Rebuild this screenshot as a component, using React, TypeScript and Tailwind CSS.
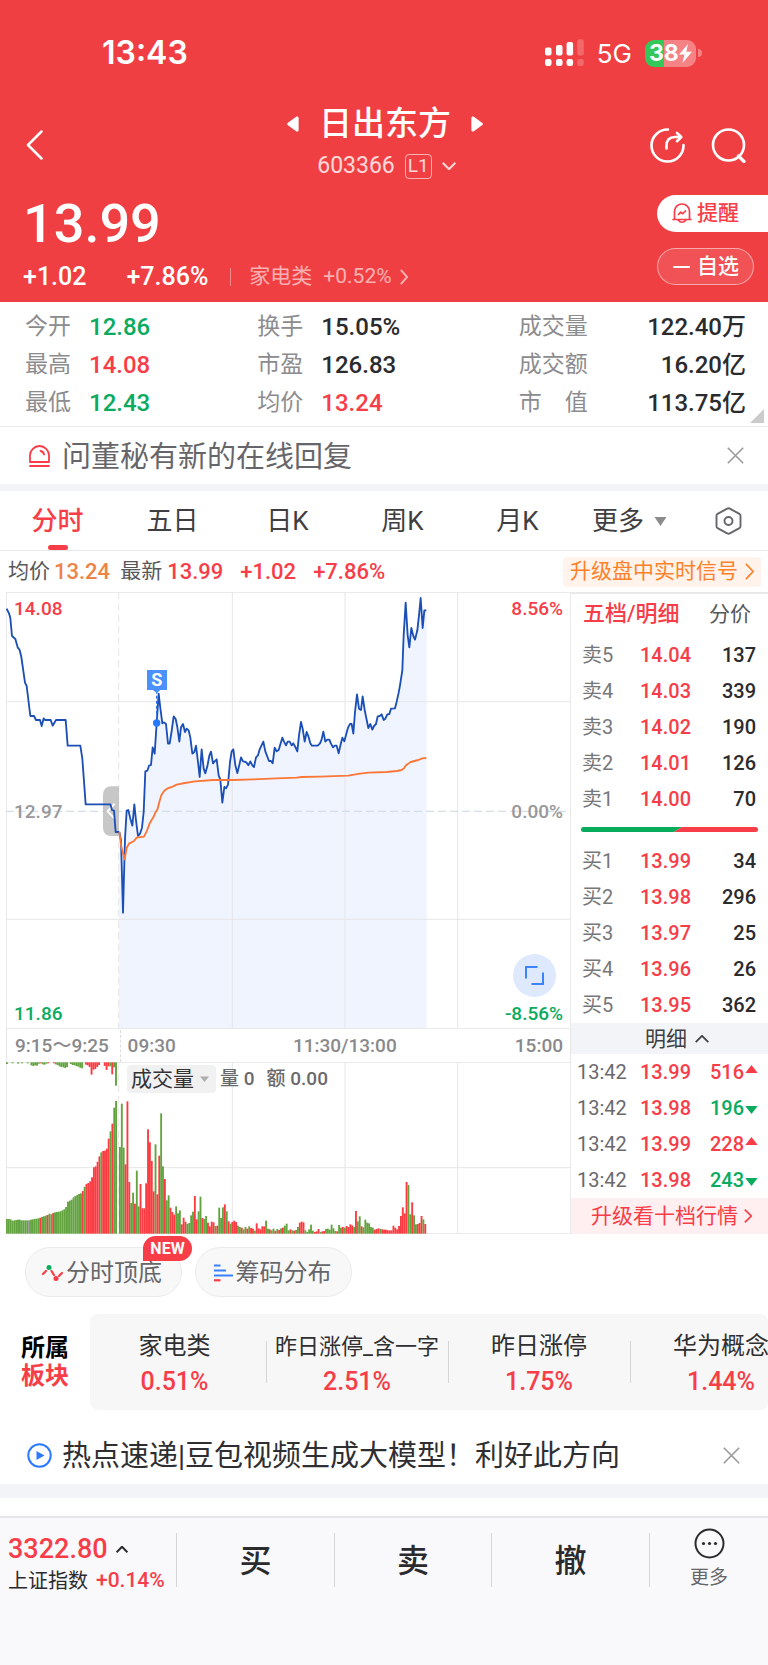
import React from 'react';

const RED = 'text-[#f73d48]';
const GREEN = 'text-[#0aab5f]';

const PRICE_LINE =
  '20,70 27,84 31,98 36,152 46,161 53,186 59,194 64,215 75,292 80,302 91,392 102,392 108,404 120,404 125,422 131,399 135,404 152,404 158,421 168,404 197,404 203,481 241,481 247,520 257,657 331,657 336,674 342,676 347,740 358,740';
const SESSION_LINE =
  '358,740 363,765 369,982 375,760 380,676 385,674 391,700 397,721 403,657 408,705 414,752 420,745 426,727 431,680 436,558 442,556 447,541 453,539 458,486 464,505 470,413 476,325 481,368 487,414 492,411 498,416 504,475 509,475 515,437 521,393 527,401 532,425 538,469 543,426 549,416 555,440 560,430 566,435 571,457 577,505 583,500 588,481 594,530 599,575 605,492 611,550 616,564 622,543 628,511 633,499 639,534 644,528 650,522 656,570 661,583 667,652 673,605 678,609 684,598 690,530 695,498 700,492 706,540 712,563 718,538 723,516 729,528 734,529 740,532 745,540 751,528 757,540 762,545 768,516 774,510 779,492 790,469 796,498 807,527 813,527 818,534 824,487 830,498 836,494 847,457 852,469 858,480 863,469 869,469 875,480 880,474 886,485 892,498 897,450 903,410 908,430 914,469 920,440 925,452 931,474 936,481 953,481 960,474 965,462 970,439 976,469 982,463 988,463 993,475 999,486 1004,481 1010,481 1016,504 1021,481 1027,457 1033,468 1039,445 1044,427 1050,416 1055,416 1060,445 1065,380 1071,327 1077,370 1083,374 1088,333 1094,374 1105,428 1111,416 1117,433 1122,422 1128,416 1133,393 1139,392 1145,387 1151,404 1156,400 1162,387 1168,386 1173,370 1185,369 1190,349 1196,322 1200,300 1207,255 1211,150 1217,52 1223,150 1228,186 1234,128 1240,152 1245,163 1252,135 1257,90 1262,38 1268,128 1273,75 1279,75';
const AVERAGE_LINE =
  '358,740 364,785 374,822 380,788 387,775 402,767 410,757 432,754 440,738 450,712 460,696 466,682 473,670 478,650 484,630 492,617 503,609 518,604 530,598 555,593 585,588 640,584 700,584 760,582 830,579 890,577 905,575 960,574 1045,571 1080,565 1105,562 1160,560 1190,557 1205,554 1212,549 1218,540 1232,530 1255,524 1267,519 1279,518';

// Each entry: colour letter followed by the y of the bar's free end.
const AUCTION_BARS =
  'g566 g566 g567 g571 g570 g569 g568 g568 g570 g570 g570 g570 n570 g568 g567 g566 g565 g564 r562 g560 g558 g556 r554 g550 g552 r548 g546 g545 g544 g543 g540 g537 g530 g514 g511 g508 g501 g497 g494 g491 g489 r482 g469 r461 r458 r453 r441 r411 r408 r394 r378 g366 r362 r361 r355 r325 g303 r280 g232 g212'.split(' ');
const SESSION_BARS =
  'g350 g220 g352 r402 r213 r455 g518 g487 r520 g421 g528 r461 r534 r534 r459 r297 r336 r392 r483 g342 r492 r376 g249 g408 r446 g510 g495 r532 r545 r553 g528 g549 g540 r582 r562 r574 g581 g578 g555 g544 r497 r567 g543 g499 r563 g566 g557 r577 r588 r574 r576 g587 r586 g532 g563 g531 r522 g543 r573 g580 r575 r571 r575 g586 g590 r592 g597 g590 r595 g588 r593 r595 g601 r579 r594 r597 r588 r588 g571 g595 r597 g600 g595 r602 g596 r599 g594 r592 g586 g580 g600 r597 g600 r601 g599 g590 r577 r574 r576 g600 g605 g597 g583 g601 r605 r603 r596 g605 r603 r602 g596 g595 g598 g583 g594 g602 r603 g584 g592 r590 g592 r587 r590 r582 r585 g590 r542 g573 g558 r588 g591 g568 g577 g579 g590 g592 r598 r596 r594 g596 r597 r598 r598 r600 r600 r600 r586 r592 r597 r587 r557 r531 r549 r455 g464 g552 r516 g555 g582 r581 r578 r557 g567 r581'.split(' ');
const UNMATCHED_BARS =
  'g5 g0 g0 g3 g0 g0 g4 g0 g3 g0 g0 g3 g0 g9 g11 g9 g10 g4 r3 g6 g7 g4 r3 g0 g0 r3 g6 g8 g12 g14 g15 g17 g14 g0 g5 g8 g9 g11 g13 g16 g18 g0 r7 r9 r14 r37 r22 r20 r14 r8 g0 g0 r11 r23 r12 g12 r36 g15 g70'.split(' ');

const BAR_FILL: Record<string, string> = { g: '#62a33f', r: '#fb3b41', n: '#8f8f8f' };

type Cell = { label: string; value: string; tone: string };
const QUOTES: Cell[][] = [
  [
    { label: '今开', value: '12.86', tone: GREEN },
    { label: '最高', value: '14.08', tone: RED },
    { label: '最低', value: '12.43', tone: GREEN },
  ],
  [
    { label: '换手', value: '15.05%', tone: 'text-[#2b2b2e]' },
    { label: '市盈', value: '126.83', tone: 'text-[#2b2b2e]' },
    { label: '均价', value: '13.24', tone: RED },
  ],
  [
    { label: '成交量', value: '122.40万', tone: 'text-[#2b2b2e]' },
    { label: '成交额', value: '16.20亿', tone: 'text-[#2b2b2e]' },
    { label: '市　值', value: '113.75亿', tone: 'text-[#2b2b2e]' },
  ],
];

const ASKS = [
  ['卖5', '14.04', '137'],
  ['卖4', '14.03', '339'],
  ['卖3', '14.02', '190'],
  ['卖2', '14.01', '126'],
  ['卖1', '14.00', '70'],
];
const BIDS = [
  ['买1', '13.99', '34'],
  ['买2', '13.98', '296'],
  ['买3', '13.97', '25'],
  ['买4', '13.96', '26'],
  ['买5', '13.95', '362'],
];
const TRADES = [
  { time: '13:42', price: '13.99', qty: '516', up: true },
  { time: '13:42', price: '13.98', qty: '196', up: false },
  { time: '13:42', price: '13.99', qty: '228', up: true },
  { time: '13:42', price: '13.98', qty: '243', up: false },
];
const SECTORS = [
  { name: '家电类', change: '0.51%', size: 'text-2xl' },
  { name: '昨日涨停_含一字', change: '2.51%', size: 'text-[22px]' },
  { name: '昨日涨停', change: '1.75%', size: 'text-2xl' },
  { name: '华为概念', change: '1.44%', size: 'text-2xl' },
];

function Chevron({ d, className, w = 2 }: { d: string; className: string; w?: number }) {
  return (
    <svg viewBox="0 0 20 20" preserveAspectRatio="none" className={className} fill="none" stroke="currentColor" strokeWidth={w} aria-hidden="true">
      <path d={d} vectorEffect="non-scaling-stroke" />
    </svg>
  );
}
const RIGHT = 'M2 1 L18 10 L2 19';
const UP = 'M1 18 L10 2 L19 18';
const DOWN = 'M1 2 L10 18 L19 2';

function StatusBar() {
  return (
    <div className="flex h-[34px] items-center justify-between pl-[102px] pr-[66px] font-['Inter',sans-serif] text-white">
      <span className="text-[32px] font-semibold">13:43</span>
      <div className="flex items-center">
        <svg width="39" height="28" viewBox="0 0 39 28" fill="#fff" aria-hidden="true">
          <rect x="0" y="8.500" width="6.500" height="8" rx="2" />
          <rect x="11" y="6" width="6.500" height="10.500" rx="2" />
          <rect x="21.600" y="3" width="6.500" height="13.500" rx="2" />
          <rect x="32.300" y="0.300" width="6.500" height="16.200" rx="2" opacity=".22" />
          <rect x="0" y="20" width="6.500" height="7" rx="2.200" />
          <rect x="11" y="20" width="6.500" height="7" rx="2.200" />
          <rect x="21.600" y="20" width="6.500" height="7" rx="2.200" />
          <rect x="32.300" y="20" width="6.500" height="7" rx="2.200" opacity=".22" />
        </svg>
        <span className="ml-[13px] text-[26px]">5G</span>
        <div className="relative ml-[13px] flex h-[27px] w-[51px] items-center overflow-hidden rounded-[9px] bg-gradient-to-r from-[#35c759] from-37% to-white/35 to-37% pl-1 text-[23px] font-bold">
          38
          <svg width="13" height="19" viewBox="0 0 13 19" fill="#fff" aria-hidden="true">
            <path d="M9 0 L0 10.500 H5.500 L3.500 19 L13 7.800 H7.300 Z" />
          </svg>
        </div>
        <i className="ml-0.5 h-2 w-1 rounded-r-full bg-white/35" />
      </div>
    </div>
  );
}

function Header() {
  return (
    <header className="bg-[#f03f42] pt-9 text-white">
      <StatusBar />
      <div className="mt-[34px] grid h-[82px] grid-cols-[1fr_auto_1fr] items-center pl-[26px] pr-[22px]">
        <button type="button" aria-label="返回" className="flex w-8">
          <svg width="17" height="30" viewBox="0 0 17 30" fill="none" stroke="#fff" strokeWidth="2.500" strokeLinecap="round" strokeLinejoin="round">
            <path d="M15.500 1.500 L2 15 L15.500 28.500" />
          </svg>
        </button>
        <div className="flex h-full flex-col items-center pr-0.5">
          <div className="flex h-10 items-center gap-5">
            <button type="button" aria-label="上一只">
              <svg width="12" height="16" viewBox="0 0 12 16" fill="#fff"><path d="M.6 7 L9.500 .6 Q11.600 0 11.600 2 V14 Q11.600 16 9.500 15.400 L.6 9 Q-.3 8 .6 7Z" /></svg>
            </button>
            <h1 className="text-[33px] font-medium leading-10">日出东方</h1>
            <button type="button" aria-label="下一只">
              <svg width="12" height="16" viewBox="0 0 12 16" fill="#fff"><path d="M11.400 7 L2.500 .6 Q.4 0 .4 2 V14 Q.4 16 2.500 15.400 L11.400 9 Q12.300 8 11.400 7Z" /></svg>
            </button>
          </div>
          <button type="button" className="mt-[9px] flex h-[26px] items-center gap-2.5 pl-[3px] text-[23px] text-white/80">
            603366
            <span className="flex h-[25px] w-[27px] items-center justify-center rounded-[4px] border border-white/60 text-[19px]">L1</span>
            <Chevron d={DOWN} className="h-[8px] w-[14px]" />
          </button>
        </div>
        <div className="flex items-center justify-end gap-[26px]">
          <button type="button" aria-label="分享">
            <svg width="35" height="35" viewBox="0 0 35 35" fill="none" stroke="#fff" strokeWidth="2.600" strokeLinecap="round" strokeLinejoin="round">
              <path d="M18 1.500 A16 16 0 1 0 33.500 17" />
              <path d="M16.500 20.500 V18 Q16.500 9 25 9 H30.500 M27 5 L31.300 9 L27 13.200" />
            </svg>
          </button>
          <button type="button" aria-label="搜索">
            <svg width="35" height="35" viewBox="0 0 35 35" fill="none" stroke="#fff" strokeWidth="2.600" strokeLinecap="round">
              <circle cx="17.500" cy="17" r="15.500" />
              <path d="M27.500 28 L33 33.500" strokeWidth="3.200" />
            </svg>
          </button>
        </div>
      </div>
      <div className="flex h-[116px] items-start justify-between pl-[23px] pt-[9px]">
        <div>
          <p className="h-[58px] text-[54px] font-medium leading-[58px]">13.99</p>
          <div className="mt-[9px] flex h-[30px] items-center text-[25px]">
            <span className="font-medium">+1.02</span>
            <span className="ml-10 font-medium">+7.86%</span>
            <i className="ml-[22px] h-[18px] w-px bg-white/40" />
            <a href="#sector" className="ml-[18px] flex items-center text-[21px] text-white/60">
              家电类
              <span className="ml-[11px]">+0.52%</span>
              <Chevron d={RIGHT} className="ml-2 h-4 w-2" />
            </a>
          </div>
        </div>
        <div className="flex flex-col items-start gap-4">
          <button type="button" className="flex h-[37px] w-[111px] items-center rounded-l-full bg-white pl-[15px] text-[21px] font-medium text-[#f73d48]">
            <svg width="20" height="21" viewBox="0 0 20 21" fill="none" stroke="currentColor" strokeWidth="1.700" strokeLinecap="round" strokeLinejoin="round" className="mr-[5px]" aria-hidden="true">
              <path d="M1 16.500 H19 M2.500 16 V8.500 A7.500 7.500 0 0 1 17.500 8.500 V16 M6 17 Q10 21.500 14 17" />
              <path d="M6.500 11.500 L8.700 9.200 L10.700 10.700 L13.500 8" />
            </svg>
            提醒
          </button>
          <button type="button" className="flex h-[37px] w-[97px] items-center rounded-full border border-white/50 bg-white/10 pl-[15px] text-[21px] font-medium">
            <i className="mr-[7px] h-0.5 w-[17px] rounded-full bg-white" />
            自选
          </button>
        </div>
      </div>
    </header>
  );
}

function Quotes() {
  return (
    <section className="relative grid grid-cols-[232fr_261fr_227fr] border-b border-[#e9e9eb] pb-[5px] pl-[25px] pr-[22px] pt-[7px] text-[23px]">
      {QUOTES.map((column, i) => (
        <dl key={i} className="flex flex-col gap-0.5">
          {column.map((c) => (
            <div key={c.label} className={i === 2 ? 'flex h-9 items-center justify-between' : 'flex h-9 items-center gap-[18px]'}>
              <dt className="text-[#8c8c8f]">{c.label}</dt>
              <dd className={`text-2xl font-medium ${c.tone}`}>{c.value}</dd>
            </div>
          ))}
        </dl>
      ))}
      <svg width="14" height="14" viewBox="0 0 14 14" className="absolute bottom-[3px] right-[4px]" aria-hidden="true">
        <path d="M14 0 V14 H0Z" fill="#cbcbcb" />
      </svg>
    </section>
  );
}

function CloseButton() {
  return (
    <button type="button" aria-label="关闭" className="ml-auto">
      <svg width="17" height="17" viewBox="0 0 17 17" stroke="#9a9a9a" strokeWidth="1.600"><path d="M.8 .8 L16.200 16.200 M16.200 .8 L.8 16.200" /></svg>
    </button>
  );
}

function Tabs() {
  const tabs = ['五日', '日K', '周K', '月K'];
  return (
    <nav className="grid h-[60px] grid-cols-[repeat(6,115fr)_78fr] border-b border-[#e9e9eb] text-[26px] text-[#3f3f42]">
      <button type="button" className="relative pt-0.5 font-medium text-[#f73d48]">
        分时
        <i className="absolute bottom-0 left-1/2 h-[5px] w-5 -translate-x-1/2 rounded-full bg-[#f73d48]" />
      </button>
      {tabs.map((t) => (
        <button type="button" key={t} className="pt-0.5">{t}</button>
      ))}
      <button type="button" className="flex items-center justify-center gap-2.5 pr-1.5 pt-0.5">
        更多
        <svg width="13" height="9" viewBox="0 0 13 9" aria-hidden="true"><path d="M.5 0 H12.500 L6.500 9Z" fill="#8c8c8c" /></svg>
      </button>
      <button type="button" aria-label="设置" className="flex items-center justify-center pr-0.5">
        <svg width="27" height="28" viewBox="0 0 27 28" fill="none" stroke="#66666a" strokeWidth="1.900" strokeLinejoin="round">
          <path d="M12.200 1.600 Q13.500 .9 14.800 1.600 L24.400 6.800 Q25.500 7.500 25.500 8.800 V19.200 Q25.500 20.500 24.400 21.200 L14.800 26.400 Q13.500 27.100 12.200 26.400 L2.600 21.200 Q1.500 20.500 1.500 19.200 V8.800 Q1.500 7.500 2.600 6.800Z" />
          <circle cx="13.500" cy="14" r="4" />
        </svg>
      </button>
    </nav>
  );
}

function SignalRow() {
  return (
    <div className="flex h-[41px] items-center pl-2 pr-[7px] text-[21px] text-[#58585b]">
      <span>均价</span>
      <span className="ml-1 text-[22px] font-medium text-[#ee8347]">13.24</span>
      <span className="ml-2.5">最新</span>
      <span className={`ml-[5px] text-[22px] font-medium ${RED}`}>13.99</span>
      <span className={`ml-[17px] text-[22px] font-medium ${RED}`}>+1.02</span>
      <span className={`ml-[17px] text-[22px] font-medium ${RED}`}>+7.86%</span>
      <a href="#signal" className="ml-auto flex h-[30px] items-center gap-[7px] rounded-[4px] bg-[#fff3eb] px-[7px] text-[#fc8128]">
        升级盘中实时信号
        <Chevron d={RIGHT} className="h-[17px] w-[9px]" w={1.7} />
      </a>
    </div>
  );
}

function PriceChart() {
  return (
    <div className="relative h-[437px] text-[19px] font-medium leading-6">
      <svg viewBox="18 20 1695 1311" preserveAspectRatio="none" className="absolute inset-0 h-full w-full" fill="none" role="img" aria-label="分时走势">
        <polygon points={`357,1331 ${SESSION_LINE} 1280,75 1280,1331`} fill="#eff4fe" />
        <g stroke="#e6e6e8" strokeWidth="3">
          <path d="M18 349 H1713 M18 1002 H1713 M18 1330 H1713 M18 21 H1713 M19 20 V1331 M697 20 V1331 M1035 20 V1331 M1373 20 V1331 M1712 20 V1331" />
          <path d="M356 20 V1331" strokeDasharray="22 12" />
          <path d="M18 678 H1713" stroke="#d3dfe8" strokeWidth="4" strokeDasharray="24 12" />
        </g>
        <path d="M357 603 H335 Q309 603 309 629 V727 Q309 752 335 752 H357Z" fill="#bdbdbd" opacity=".85" />
        <path d="M344 655 L323 678 L344 700" stroke="#fff" strokeWidth="6" />
        <g strokeWidth="5.500" strokeLinejoin="round">
          <polyline points={PRICE_LINE} stroke="#1b4fb5" />
          <polyline points={SESSION_LINE} stroke="#1b4fb5" />
          <polyline points={AVERAGE_LINE} stroke="#fb7738" />
        </g>
        <path d="M470 316 V413" stroke="#2f6fe6" strokeWidth="4" strokeDasharray="9 6" />
        <circle cx="470" cy="413" r="11" fill="#2479ff" />
        <path d="M458 313 H482 L470 324Z" fill="#4b91fd" />
      </svg>
      <span className="absolute left-[26.700%] top-[78px] flex h-5 w-5 -translate-x-1/2 items-center justify-center bg-[#4b91fd] text-[18px] font-bold text-white">S</span>
      <span className={`absolute left-2 top-[5px] ${RED}`}>14.08</span>
      <span className="absolute left-2 top-[208px] text-[#98989b]">12.97</span>
      <span className={`absolute bottom-[3px] left-2 ${GREEN}`}>11.86</span>
      <span className={`absolute right-2 top-[5px] ${RED}`}>8.56%</span>
      <span className="absolute right-2 top-[208px] text-[#98989b]">0.00%</span>
      <span className={`absolute bottom-[3px] right-2 ${GREEN}`}>-8.56%</span>
      <button type="button" aria-label="全屏" className="absolute bottom-8 right-[15px] flex h-[43px] w-[43px] items-center justify-center rounded-full bg-[#dfe9fd]">
        <svg width="19" height="19" viewBox="0 0 19 19" fill="none" stroke="#3c83fb" strokeWidth="2"><path d="M1 12.500 V1 H12.500 M18 6.500 V18 H6.500" /></svg>
      </button>
    </div>
  );
}

function VolumeChart() {
  return (
    <div className="relative h-[172px]">
      <svg viewBox="18 95 1695 516" preserveAspectRatio="none" className="absolute inset-0 h-full w-full" fill="none" role="img" aria-label="成交量">
        <g stroke="#e6e6e8" strokeWidth="3">
          <path d="M18 96 H1713 M18 412 H1713 M18 610 H1713 M19 95 V611 M697 95 V611 M1035 95 V611 M1373 95 V611 M1712 95 V611" />
          <path d="M356 95 V611" strokeDasharray="22 12" />
        </g>
        {UNMATCHED_BARS.map((b, i) => (
          <rect key={`u${i}`} x={18 + i * 5.64} y={96} width={5.7} height={Number(b.slice(1))} fill={BAR_FILL[b[0]]} />
        ))}
        {AUCTION_BARS.map((b, i) => (
          <rect key={`a${i}`} x={18 + i * 5.55} y={Number(b.slice(1))} width={5.6} height={610 - Number(b.slice(1))} fill={BAR_FILL[b[0]]} />
        ))}
        {SESSION_BARS.map((b, i) => (
          <rect key={`s${i}`} x={357 + i * 5.62} y={Number(b.slice(1))} width={5.6} height={610 - Number(b.slice(1))} fill={BAR_FILL[b[0]]} />
        ))}
      </svg>
      <div className="absolute left-[121px] top-[3px] flex items-center gap-1 text-[19px] font-medium text-[#6a6a6d]">
        <button type="button" className="flex h-7 w-[89px] items-center gap-1.5 rounded-[4px] bg-[#f1f1f1] pl-1 text-[21px] font-normal text-[#333336]">
          成交量
          <svg width="9" height="6" viewBox="0 0 9 6" aria-hidden="true"><path d="M0 .5 H9 L4.500 6Z" fill="#adadad" /></svg>
        </button>
        <span>量 0</span>
        <span className="ml-2">额 0.00</span>
      </div>
    </div>
  );
}

function BookRows({ rows }: { rows: string[][] }) {
  return (
    <table className="w-full table-fixed">
      <tbody>
        {rows.map(([label, price, qty]) => (
          <tr key={label} className="h-9">
            <th scope="row" className="w-[69px] pl-[11px] text-left font-normal text-[#77777a]">{label}</th>
            <td className={`font-medium ${RED}`}>{price}</td>
            <td className="pr-3 text-right font-medium text-[#2b2b2e]">{qty}</td>
          </tr>
        ))}
      </tbody>
    </table>
  );
}

function OrderBook() {
  return (
    <aside className="w-[197px] shrink-0 border-t-2 border-[#e9e9eb] text-xl leading-6">
      <div className="flex h-[43px] items-center justify-between pb-1 pl-3 pr-[17px] text-[21px]">
        <button type="button" className={`text-[22px] font-medium ${RED}`}>五档/明细</button>
        <button type="button" className="text-[#58585b]">分价</button>
      </div>
      <BookRows rows={ASKS} />
      <div className="flex h-[26px] items-center pb-0.5 pl-[10px] pr-[10px]">
        <svg viewBox="0 0 177 5" preserveAspectRatio="none" className="h-[5px] w-full rounded-full" aria-hidden="true">
          <path d="M0 0 H101 L93 5 H0Z" fill="#06ab5b" />
          <path d="M101 0 H177 V5 H93Z" fill="#f73d48" />
        </svg>
      </div>
      <BookRows rows={BIDS} />
      <button type="button" className="flex h-[31px] w-full items-center justify-center gap-2 bg-[#f3f4f8] pl-[15px] text-[21px] text-[#3f3f42]">
        明细
        <Chevron d={UP} className="h-2 w-[14px]" w={1.7} />
      </button>
      <table className="w-full table-fixed">
        <tbody>
          {TRADES.map((t, i) => (
            <tr key={i} className="h-9">
              <td className="w-[69px] pl-1.5 text-[#6a6a6d]">{t.time}</td>
              <td className={`w-[56px] font-medium ${RED}`}>{t.price}</td>
              <td className={`pr-2.5 font-medium ${t.up ? RED : GREEN}`}>
                <div className="flex items-center justify-end gap-px">
                  {t.qty}
                  <svg width="13" height="14" viewBox="0 0 13 14" fill="currentColor" role="img" aria-label={t.up ? '买入' : '卖出'}>
                    <path d={t.up ? 'M.3 8 H12.700 L6.500 0Z' : 'M.3 5 H12.700 L6.500 13Z'} />
                  </svg>
                </div>
              </td>
            </tr>
          ))}
        </tbody>
      </table>
      <a href="#level2" className="flex h-9 items-center justify-center gap-1.5 bg-[#ffeff0] pl-1 text-[21px] text-[#f73d48]">
        升级看十档行情
        <Chevron d={RIGHT} className="h-[14px] w-2" w={1.7} />
      </a>
    </aside>
  );
}

function Tools() {
  return (
    <div className="flex gap-[13px] pl-[25px] pt-[13px] text-2xl text-[#66666a]">
      <button type="button" className="relative flex h-[50px] w-[157px] items-center justify-center gap-[3px] rounded-full border border-[#ebebec] bg-[#f8f8f8] pr-[3px] pt-0.5">
        <svg width="21" height="18" viewBox="0 0 21 18" fill="none" stroke="#f73d48" strokeWidth="2.200" strokeLinecap="round" aria-hidden="true">
          <path d="M1 10 L4 7 M9.500 7 L12 11 M17 12 L20 9" />
          <circle cx="7" cy="3.500" r="2.500" fill="#0aab5f" stroke="none" />
          <circle cx="14" cy="14.500" r="2.500" fill="#f73d48" stroke="none" />
        </svg>
        分时顶底
        <span className="absolute -right-[11px] -top-3 flex h-[25px] w-[49px] items-center justify-center rounded-full rounded-bl-[3px] bg-[#f73d48] text-base font-bold text-white">NEW</span>
      </button>
      <button type="button" className="flex h-[50px] w-[157px] items-center justify-center gap-[3px] rounded-full border border-[#ebebec] bg-[#f8f8f8] pr-[3px] pt-0.5">
        <svg width="20" height="18" viewBox="0 0 20 18" strokeWidth="2.200" stroke="#3a80fb" aria-hidden="true">
          <path d="M1 1.500 H7.500 M1 6.500 H13 M1 11.500 H20" />
          <path d="M1 16.300 H7.500" stroke="#f73d48" />
        </svg>
        筹码分布
      </button>
    </div>
  );
}

function Sectors() {
  return (
    <section id="sector" className="mt-[17px] flex h-24">
      <h2 className="flex w-[90px] shrink-0 flex-col justify-center pl-[21px] text-2xl font-bold leading-7 text-black">
        所属
        <span className={RED}>板块</span>
      </h2>
      <ul className="flex min-w-0 flex-1 items-center overflow-hidden rounded-lg bg-[#f7f7f7]">
        {SECTORS.map((s) => (
          <li key={s.name} className="relative flex w-[182px] shrink-0 flex-col items-center whitespace-nowrap pr-0.5 pt-1 text-[#2f2f32] first:w-[177px] first:pr-2">
            <span className={`flex h-9 items-center ${s.size}`}>{s.name}</span>
            <span className={`flex h-9 items-center text-[25px] font-medium ${RED}`}>{s.change}</span>
            <i className="absolute right-0 top-1/2 h-[42px] w-px -translate-y-1/2 bg-[#d6d6d8]" />
          </li>
        ))}
      </ul>
    </section>
  );
}

function BottomBar() {
  return (
    <footer className="h-[149px] border-t-2 border-[#e4e5e9] bg-[#f9f9fc] pt-[15px]">
      <div className="grid grid-cols-[177fr_158fr_157fr_158fr_118fr] grid-rows-[54px] divide-x divide-[#d6d6d8] text-[#2b2b2e]">
        <a href="#index" className="flex flex-col pl-2">
          <span className={`flex h-8 shrink-0 items-center gap-2 text-[27px] font-medium ${RED}`}>
            3322.80
            <Chevron d={UP} className="h-[7px] w-[12px] text-[#2b2b2e]" />
          </span>
          <span className="flex h-8 shrink-0 items-center gap-2 whitespace-nowrap text-[20px]">
            上证指数 <span className={`text-[21px] font-medium ${RED}`}>+0.14%</span>
          </span>
        </a>
        <button type="button" className="pt-0.5 text-[32px] font-medium leading-none">买</button>
        <button type="button" className="pt-0.5 text-[32px] font-medium leading-none">卖</button>
        <button type="button" className="pt-0.5 text-[32px] font-medium leading-none">撤</button>
        <button type="button" className="flex flex-col items-center justify-center gap-[7px] pb-0.5 text-[19px] leading-6 text-[#66666a]">
          <svg width="31" height="31" viewBox="0 0 31 31" fill="none" stroke="#2b2b2e" strokeWidth="2" className="shrink-0" aria-hidden="true">
            <circle cx="15.500" cy="15.500" r="14" />
            <g fill="#2b2b2e" stroke="none">
              <circle cx="9.500" cy="15.500" r="1.600" />
              <circle cx="15.500" cy="15.500" r="1.600" />
              <circle cx="21.500" cy="15.500" r="1.600" />
            </g>
          </svg>
          更多
        </button>
      </div>
    </footer>
  );
}

export default function App() {
  return (
    <div className="w-full overflow-hidden bg-white font-['Roboto','Noto_Sans_CJK_SC',sans-serif]">
      <Header />
      <Quotes />
      <div className="flex h-[57px] items-center pl-[29px] pr-6 text-[29px] text-[#66666a]">
        <svg width="21" height="22" viewBox="0 0 21 22" fill="none" stroke="#f73d48" strokeWidth="1.800" strokeLinecap="round" className="mr-3" aria-hidden="true">
          <path d="M1 17 V10.500 A9.500 9.500 0 0 1 20 10.500 V17Z M1 21 H20" strokeLinejoin="round" />
          <path d="M11.500 6 Q14.500 6.500 15 9.500" />
        </svg>
        <span className="pt-1">问董秘有新的在线回复</span>
        <CloseButton />
      </div>
      <div className="h-[7px] bg-[#f2f4f8]" />
      <Tabs />
      <SignalRow />
      <main className="flex pl-1.5">
        <div className="min-w-0 flex-1">
          <PriceChart />
          <div className="grid h-[33px] grid-cols-[113fr_226fr_226fr] items-center border-x border-[#e6e6e8] pt-px text-[19px] font-medium text-[#89898c]">
            <span className="pl-2">9:15～9:25</span>
            <span className="flex h-full items-center border-l border-dashed border-[#dcdcde] pl-[7px]">09:30</span>
            <span className="relative pr-[7px] text-right">
              <span className="absolute left-0 -translate-x-1/2">11:30/13:00</span>
              15:00
            </span>
          </div>
          <VolumeChart />
        </div>
        <OrderBook />
      </main>
      <Tools />
      <Sectors />
      <div className="mt-4 flex h-[58px] items-center pl-[27px] pr-7 text-[29px] text-[#2f2f32]">
        <svg width="25" height="25" viewBox="0 0 25 25" fill="none" stroke="#2d79ff" strokeWidth="2" className="mr-[10px]" aria-hidden="true">
          <circle cx="12.500" cy="12.500" r="11.200" />
          <path d="M9.500 8 L17.500 12.500 L9.500 17Z" fill="#2d79ff" stroke="none" />
        </svg>
        <span className="pt-1">热点速递|豆包视频生成大模型！利好此方向</span>
        <CloseButton />
      </div>
      <div className="mb-[18px] h-[14px] bg-[#f2f4f8]" />
      <BottomBar />
    </div>
  );
}
